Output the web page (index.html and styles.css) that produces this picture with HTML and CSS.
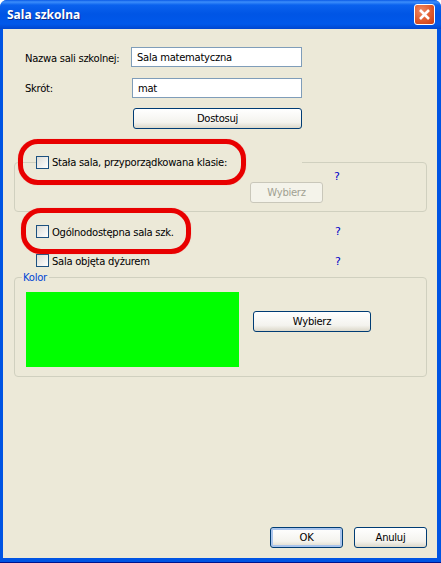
FILE: index.html
```html
<!DOCTYPE html>
<html lang="pl">
<head>
    <meta charset="UTF-8">
    <title>Sala szkolna</title>
    <link rel="stylesheet" href="styles.css">
</head>
<body>
    <div class="window">
        <div class="titlebar">
            <span class="title">Sala szkolna</span>
            <button class="close-btn" type="button" aria-label="Zamknij">
                <svg width="13" height="13" viewBox="0 0 13 13"><path d="M2 2 L11 11 M11 2 L2 11" stroke="#fff" stroke-width="2.6" fill="none"/></svg>
            </button>
        </div>

        <div class="client">
            <div class="row row-name">
                <label class="field-label">Nazwa sali szkolnej:</label>
                <input class="text-input" type="text" value="Sala matematyczna">
            </div>
            <div class="row row-short">
                <label class="field-label">Skrót:</label>
                <input class="text-input input-short" type="text" value="mat">
            </div>
            <button class="btn btn-adjust" type="button">Dostosuj</button>

            <fieldset class="group group-fixed">
                <legend class="legend-check">
                    <span class="check"></span>
                    <span>Stała sala, przyporządkowana klasie:</span>
                </legend>
                <button class="btn btn-disabled" type="button" disabled>Wybierz</button>
                <span class="help help-fixed">?</span>
            </fieldset>

            <div class="check-row row-public">
                <span class="check"></span>
                <span class="check-text">Ogólnodostępna sala szk.</span>
                <span class="help">?</span>
            </div>
            <div class="check-row row-duty">
                <span class="check"></span>
                <span class="check-text">Sala objęta dyżurem</span>
                <span class="help help-duty">?</span>
            </div>

            <fieldset class="group group-color">
                <legend class="legend-color">Kolor</legend>
                <div class="swatch"></div>
                <button class="btn btn-pick" type="button">Wybierz</button>
            </fieldset>

            <div class="actions">
                <button class="btn btn-default" type="button">OK</button>
                <button class="btn" type="button">Anuluj</button>
            </div>

            <!-- Red marks drawn over the dialog -->
            <div class="mark mark-one"></div>
            <div class="mark mark-two"></div>
        </div>
    </div>
</body>
</html>
```

FILE: styles.css
```css
* { box-sizing: border-box; }
html, body { margin: 0; padding: 0; }
body { width: 441px; height: 563px; overflow: hidden; background: #fff; font-family: "DejaVu Sans", sans-serif; font-size: 10px; letter-spacing: -0.27px; color: #000; }

.window {
    width: 441px;
    height: 563px;
    display: flex;
    flex-direction: column;
    background: #0054e3;
    border-radius: 7px 7px 0 0;
    padding: 0 4px 4px 3px;
    border-bottom: 1px solid #00138c;
}

.titlebar {
    height: 29px;
    margin: 0 -4px 0 -3px;
    padding: 0 6px 0 7px;
    display: flex;
    align-items: center;
    justify-content: space-between;
    border-radius: 7px 7px 0 0;
    background: linear-gradient(#0a5ae6 0, #3c8efb 2px, #0a62ee 5px, #0055e5 14px, #0058ea 24px, #0046cf 29px);
}
.title { font-family: "Noto Sans", sans-serif; font-weight: bold; font-size: 12px; letter-spacing: 0; color: #fff; text-shadow: 1px 1px 0 #0a2a8c; }
.close-btn {
    width: 21px;
    height: 21px;
    padding: 0;
    display: flex;
    align-items: center;
    justify-content: center;
    border: 1px solid #fff;
    border-radius: 3px;
    background: radial-gradient(circle at 35% 30%, #ef8a66, #df5a2c 55%, #c43a14);
}

.client { flex: 1; position: relative; background: #ece9d8; padding: 18px 10px 0 11px; display: flex; flex-direction: column; }

.row { display: flex; align-items: center; height: 20px; }
.row-short { margin-top: 11px; }
.field-label { width: 106px; flex: none; margin-left: 11px; }
.row-name .field-label { padding-top: 2px; }
.text-input {
    height: 20px;
    border: 1px solid #7f9db9;
    background: #fff;
    padding: 0 5px;
    font: inherit;
    letter-spacing: inherit;
    color: #000;
    outline: none;
}
.row-name .text-input { width: 171px; }
.input-short { width: 170px; margin-left: 1px; }

.btn {
    width: 73px;
    height: 21px;
    padding: 0;
    font: inherit;
    letter-spacing: inherit;
    color: #000;
    border: 1px solid #003c74;
    border-radius: 3px;
    background: linear-gradient(#fff, #f4f3ee 70%, #dcd8ca);
}
.btn-adjust { width: 169px; margin: 10px 0 0 119px; }
.btn-default { box-shadow: inset 0 0 0 2px #a9c4ec; }
.btn-disabled { color: #a1a192; border-color: #c9c7ba; background: #f4f3ea; }

.group { margin: 0; padding: 0; border: 1px solid #d0d0bf; border-radius: 4px; position: relative; }
.group-fixed { margin-top: 27px; height: 56px; display: flex; }
.legend-check {
    display: flex;
    align-items: center;
    gap: 3px;
    width: 266px;
    height: 12px;
    margin-left: 21px;
    padding: 0;
}
.btn-disabled { margin: 14px 0 0 235px; }
.help { color: #0000c8; font-size: 11px; line-height: 12px; }
.help-fixed { margin: 3px 0 0 11px; }
.help-duty { margin-top: 3px; }

.check { width: 13px; height: 13px; flex: none; border: 1px solid #1c5180; background: linear-gradient(135deg, #dcdcd7, #fff); }
.check-row { display: flex; align-items: center; height: 13px; padding-left: 22px; }
.check-text { margin-left: 3px; width: 283px; padding-top: 1px; }
.row-public { margin-top: 13px; }
.row-duty { margin-top: 16px; }

.group-color { margin-top: 4px; height: 106px; display: flex; align-items: flex-start; }
.legend-color { margin-left: 7px; padding: 0 2px 0 1px; color: #0046d5; line-height: 13px; }
.swatch { width: 213px; height: 75px; margin: 8px 0 0 11px; background: #00ff00; }
.btn-pick { width: 118px; margin: 27px 0 0 14px; }

.actions { margin-top: auto; margin-bottom: 10px; display: flex; justify-content: flex-end; gap: 11px; }

.mark { position: absolute; border: 5px solid #e80000; box-shadow: 0 0 1px #e88; }
.mark-one { left: 15px; top: 110px; width: 228px; height: 46px; border-radius: 20px; }
.mark-two { left: 18px; top: 179px; width: 170px; height: 46px; border-radius: 20px; }
```
